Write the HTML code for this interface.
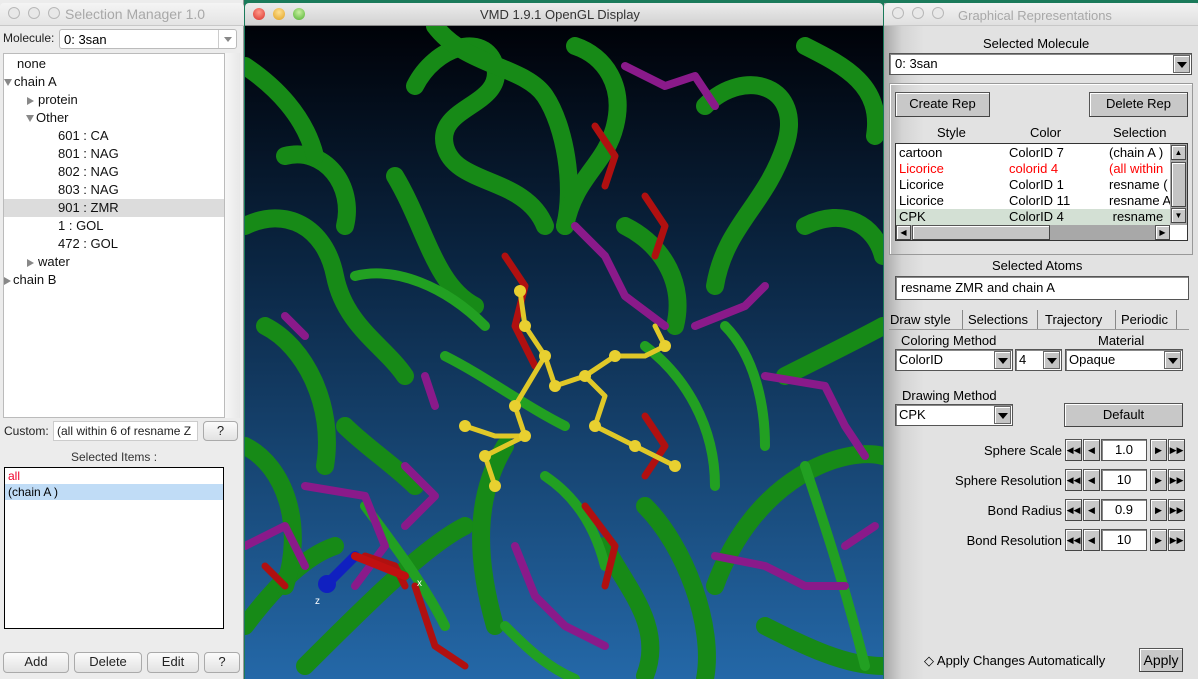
<!DOCTYPE html>
<html><head><meta charset="utf-8"><style>
*{margin:0;padding:0;box-sizing:border-box}
body{width:1198px;height:679px;overflow:hidden;position:relative;background:#1a7a5a;font-family:"Liberation Sans",sans-serif;font-size:13px;color:#000}
.a{position:absolute}
.tl{width:12px;height:12px;border-radius:50%;border:1px solid #b8b8b8;background:#e8e8e8;position:absolute;top:7px}
.btn{position:absolute;background:linear-gradient(#fbfbfb,#e2e2e2);border:1px solid #aaa;border-radius:4px;text-align:center;font-size:13px;color:#222;line-height:18px}
.tk{position:absolute;background:#c8c8c8;border:1px solid #555;border-right-color:#444;border-bottom-color:#444;box-shadow:inset 1px 1px #fff}
.fld{position:absolute;background:#fff;border:1px solid #555;box-shadow:inset 1px 1px #888}
.dd{position:absolute;width:17px;height:18px;right:1px;top:1px;background:#c4c4c4;border:1px solid #666;box-shadow:inset 1px 1px #fff}
.dd:after{content:"";position:absolute;left:3px;top:6px;border-left:5px solid transparent;border-right:5px solid transparent;border-top:6px solid #000}
.tree div{height:18px;line-height:18px;white-space:nowrap}
.tri{display:inline-block;width:0;height:0;vertical-align:middle;margin-right:2px}
.td{border-left:4px solid transparent;border-right:4px solid transparent;border-top:7px solid #888}
.tr{border-top:4px solid transparent;border-bottom:4px solid transparent;border-left:7px solid #888;margin-right:4px}
</style></head><body>
<!-- LEFT: Selection Manager -->
<div class="a" style="left:0;top:0;width:244px;height:679px;background:#ececec;border-right:1px solid #999"></div>
<div class="a" style="left:0;top:3px;width:244px;height:23px;background:linear-gradient(#f4f4f4,#e4e4e4);border-radius:4px 4px 0 0;border-bottom:1px solid #c8c8c8"></div>
<div class="tl" style="left:8px"></div><div class="tl" style="left:28px"></div><div class="tl" style="left:48px"></div>
<div class="a" style="left:65px;top:6px;font-size:14px;color:#a8a8a8">Selection Manager 1.0</div>
<div class="a" style="left:3px;top:31px;font-size:12px;color:#222">Molecule:</div>
<div class="a" style="left:59px;top:29px;width:178px;height:20px;background:#fff;border:1px solid #bbb;border-radius:3px;font-size:13px;padding:2px 4px">0: 3san<div class="a" style="right:0;top:0;width:18px;height:18px;border-left:1px solid #ccc"><div class="a" style="left:5px;top:7px;border-left:4px solid transparent;border-right:4px solid transparent;border-top:5px solid #888"></div></div></div>
<div class="a" style="left:3px;top:53px;width:222px;height:365px;background:#fff;border:1px solid #bbb"></div>
<div class="a" style="left:225px;top:53px;width:15px;height:365px;background:linear-gradient(90deg,#f6f6f6,#e8e8e8)"></div>
<div class="a" style="left:4px;top:199px;width:220px;height:18px;background:#dcdcdc"></div>
<div class="a tree" style="left:4px;top:55px;font-size:13px;color:#111">
<div style="padding-left:13px">none</div>
<div><span class="tri td"></span>chain A</div>
<div style="padding-left:23px"><span class="tri tr"></span>protein</div>
<div style="padding-left:22px"><span class="tri td"></span>Other</div>
<div style="padding-left:54px">601 : CA</div>
<div style="padding-left:54px">801 : NAG</div>
<div style="padding-left:54px">802 : NAG</div>
<div style="padding-left:54px">803 : NAG</div>
<div style="padding-left:54px">901 : ZMR</div>
<div style="padding-left:54px">1 : GOL</div>
<div style="padding-left:54px">472 : GOL</div>
<div style="padding-left:23px"><span class="tri tr"></span>water</div>
<div><span class="tri tr" style="margin-right:2px"></span>chain B</div>
</div>
<div class="a" style="left:4px;top:424px;font-size:12px;color:#222">Custom:</div>
<div class="a" style="left:53px;top:421px;width:145px;height:20px;background:#fff;border:1px solid #ccc;font-size:12px;padding:2px 3px;white-space:nowrap;overflow:hidden;color:#222">(all within 6 of resname Z</div>
<div class="btn" style="left:203px;top:421px;width:35px;height:20px">?</div>
<div class="a" style="left:71px;top:450px;font-size:12px;color:#333">Selected Items :</div>
<div class="a" style="left:4px;top:467px;width:220px;height:162px;background:#fff;border:1px solid #000"></div>
<div class="a" style="left:5px;top:484px;width:218px;height:16px;background:#c0dcf6"></div>
<div class="a" style="left:8px;top:468px;font-size:12px;line-height:16px"><div style="color:#f0002a">all</div><div>(chain A )</div></div>
<div class="btn" style="left:3px;top:652px;width:66px;height:21px">Add</div>
<div class="btn" style="left:74px;top:652px;width:68px;height:21px">Delete</div>
<div class="btn" style="left:147px;top:652px;width:52px;height:21px">Edit</div>
<div class="btn" style="left:204px;top:652px;width:36px;height:21px">?</div>

<!-- MIDDLE: VMD display -->
<div class="a" style="left:245px;top:3px;width:638px;height:23px;background:linear-gradient(#ececec,#d2d2d2);border-radius:4px 4px 0 0;border-bottom:1px solid #888"></div>
<div class="a" style="left:253px;top:8px;width:12px;height:12px;border-radius:50%;background:radial-gradient(circle at 50% 35%,#ff9a8a,#d8302a)"></div>
<div class="a" style="left:273px;top:8px;width:12px;height:12px;border-radius:50%;background:radial-gradient(circle at 50% 35%,#ffe090,#e0a020)"></div>
<div class="a" style="left:293px;top:8px;width:12px;height:12px;border-radius:50%;background:radial-gradient(circle at 50% 35%,#c8f0a0,#50b030)"></div>
<div class="a" style="left:480px;top:7px;font-size:13px;color:#333">VMD 1.9.1 OpenGL Display</div>
<svg class="a" style="left:245px;top:26px" width="638" height="653" viewBox="0 0 638 653">
<defs><linearGradient id="bg" x1="0" y1="0" x2="0" y2="1"><stop offset="0" stop-color="#000208"/><stop offset="0.35" stop-color="#0a2440"/><stop offset="1" stop-color="#2468a8"/></linearGradient></defs>
<rect width="638" height="653" fill="url(#bg)"/>
<g fill="none" stroke-linecap="round" stroke-linejoin="round">
<g stroke="#178a17" stroke-width="18">
<path d="M170 60 C190 20 240 5 250 40 C260 80 190 80 200 120 C210 160 280 150 300 200"/>
<path d="M190 0 C220 40 280 40 300 70 C320 100 330 160 320 200"/>
<path d="M460 80 C500 40 560 60 540 120 C520 180 480 200 470 260"/>
<path d="M560 20 C600 40 638 60 630 110"/>
<path d="M0 200 C40 180 80 200 90 250 C100 300 140 320 160 350"/>
<path d="M40 130 C80 120 110 160 100 200"/>
<path d="M330 20 C360 30 380 60 370 100 C360 140 330 150 320 200"/>
<path d="M470 560 C510 450 600 420 638 430"/>
<path d="M60 640 C120 580 180 520 220 500"/>
<path d="M0 600 C30 560 60 530 90 520"/>
<path d="M360 520 C380 560 420 600 400 650"/>
<path d="M540 350 C580 330 620 310 638 300"/>
<path d="M20 300 C60 320 90 380 80 440"/>
<path d="M380 200 C420 220 440 260 430 300"/>
<path d="M0 420 C40 440 60 500 40 560"/>
<path d="M150 150 C180 200 190 260 230 280"/>
<path d="M400 480 C440 520 470 600 460 653"/>
<path d="M560 200 C600 180 630 200 638 230"/>
<path d="M0 40 C30 60 60 90 70 130"/>
<path d="M260 420 C230 470 230 530 250 600"/>
<path d="M520 600 C560 620 600 640 638 640"/>
<path d="M100 400 C120 420 150 440 170 460"/>
</g>
<g stroke="#22a022" stroke-width="10">
<path d="M110 250 C150 240 200 260 240 300"/>
<path d="M200 330 C240 350 280 380 320 400"/>
<path d="M400 320 C440 350 470 400 470 460"/>
<path d="M120 480 C150 520 180 560 200 600"/>
<path d="M560 440 C580 500 600 560 620 640"/>
<path d="M260 600 C280 620 300 640 330 653"/>
<path d="M300 450 C330 470 350 500 360 540"/>
<path d="M480 300 C510 330 520 380 520 420"/>
</g>
<g stroke="#8a1a8a" stroke-width="8">
<path d="M380 40 L420 60 L450 50 L470 80"/>
<path d="M330 200 L360 230 L380 270 L420 300"/>
<path d="M450 300 L500 280 L520 260"/>
<path d="M520 350 L580 360 L600 400 L620 430"/>
<path d="M60 460 L120 470 L140 520 L110 560"/>
<path d="M0 520 L40 500 L60 540"/>
<path d="M160 440 L190 470 L160 500"/>
<path d="M270 520 L290 570 L320 600 L360 620"/>
<path d="M470 530 L520 540 L560 560 L600 560"/>
<path d="M180 350 L190 380"/>
<path d="M40 290 L60 310"/>
<path d="M600 520 L630 500"/>
</g>
<g stroke="#b01010" stroke-width="7">
<path d="M260 230 L280 260 L270 300 L290 340"/>
<path d="M350 100 L370 130 L360 160"/>
<path d="M400 170 L420 200 L410 230"/>
<path d="M340 480 L370 520 L360 560"/>
<path d="M170 560 L190 620 L220 640"/>
<path d="M120 530 L150 540 L160 560"/>
<path d="M400 390 L420 420 L400 450"/>
<path d="M20 540 L40 560"/>
</g>
<g stroke="#e0c828" stroke-width="5">
<path d="M275 265 L280 300 L300 330 L310 360 L340 350 L360 370 L350 400 L370 410 L390 420 L430 440"/>
<path d="M300 330 L270 380 L280 410 L240 430 L250 460"/>
<path d="M340 350 L370 330 L400 330 L420 320 L410 300"/>
<path d="M220 400 L250 410 L280 410"/>
</g>
<g fill="#e8d030" stroke="none">
<circle cx="275" cy="265" r="6"/><circle cx="300" cy="330" r="6"/><circle cx="310" cy="360" r="6"/><circle cx="340" cy="350" r="6"/><circle cx="350" cy="400" r="6"/><circle cx="390" cy="420" r="6"/><circle cx="430" cy="440" r="6"/><circle cx="270" cy="380" r="6"/><circle cx="280" cy="410" r="6"/><circle cx="240" cy="430" r="6"/><circle cx="250" cy="460" r="6"/><circle cx="370" cy="330" r="6"/><circle cx="420" cy="320" r="6"/><circle cx="220" cy="400" r="6"/><circle cx="280" cy="300" r="6"/>
</g>
<path d="M80 560 L110 530" stroke="#1020c0" stroke-width="10"/>
<circle cx="82" cy="558" r="9" fill="#1020c0"/>
<path d="M110 530 L160 550" stroke="#c01010" stroke-width="8"/>
</g>
<text x="70" y="578" fill="#fff" font-size="10" font-family="Liberation Sans">z</text>
<text x="172" y="560" fill="#fff" font-size="10" font-family="Liberation Sans">x</text>
</svg>

<!-- RIGHT: Graphical Representations -->
<div class="a" style="left:884px;top:3px;width:314px;height:676px;background:linear-gradient(90deg,#a8a8a8,#d4d4d4 18px,#e2e2e2 40px,#e2e2e2)"></div>
<div class="a" style="left:884px;top:3px;width:314px;height:23px;background:linear-gradient(#f2f2f2,#e0e0e0);border-radius:4px 4px 0 0;border-bottom:1px solid #c8c8c8"></div>
<div class="tl" style="left:892px"></div><div class="tl" style="left:912px"></div><div class="tl" style="left:932px"></div>
<div class="a" style="left:958px;top:8px;font-size:13px;color:#a8a8a8">Graphical Representations</div>
<div class="a" style="left:983px;top:36px;font-size:13px">Selected Molecule</div>
<div class="fld" style="left:889px;top:53px;width:303px;height:22px;padding:2px 5px">0: 3san<div class="dd" style="height:18px"></div></div>
<div class="a" style="left:889px;top:83px;width:304px;height:172px;border:1px solid #999;box-shadow:inset 1px 1px #fff"></div>
<div class="tk" style="left:895px;top:92px;width:95px;height:25px;text-align:center;line-height:22px">Create Rep</div>
<div class="tk" style="left:1089px;top:92px;width:99px;height:25px;text-align:center;line-height:22px">Delete Rep</div>
<div class="a" style="left:937px;top:125px">Style</div>
<div class="a" style="left:1030px;top:125px">Color</div>
<div class="a" style="left:1113px;top:125px">Selection</div>
<div class="a" style="left:895px;top:143px;width:293px;height:98px;background:#fff;border:1px solid #333"></div>
<div class="a" style="left:896px;top:209px;width:274px;height:16px;background:#d3e0d4"></div>
<div class="a" style="left:899px;top:145px;line-height:16px"><div>cartoon</div><div style="color:#f00">Licorice</div><div>Licorice</div><div>Licorice</div><div>CPK</div></div>
<div class="a" style="left:1009px;top:145px;line-height:16px"><div>ColorID 7</div><div style="color:#f00">colorid 4</div><div>ColorID 1</div><div>ColorID 11</div><div>ColorID 4</div></div>
<div class="a" style="left:1109px;top:145px;line-height:16px;width:61px;overflow:hidden;white-space:nowrap"><div>(chain A )</div><div style="color:#f00">(all within</div><div>resname (</div><div>resname A</div><div>&nbsp;resname</div></div>
<div class="a" style="left:1170px;top:144px;width:17px;height:81px;background:#a8a8a8"></div>
<div class="tk" style="left:1171px;top:145px;width:15px;height:15px;font-size:8px;text-align:center;line-height:13px">▲</div>
<div class="tk" style="left:1171px;top:162px;width:15px;height:45px;background:#c4c4c4"></div>
<div class="tk" style="left:1171px;top:208px;width:15px;height:15px;font-size:8px;text-align:center;line-height:13px">▼</div>
<div class="a" style="left:896px;top:225px;width:274px;height:15px;background:#a8a8a8"></div>
<div class="tk" style="left:896px;top:225px;width:15px;height:15px;font-size:8px;text-align:center;line-height:13px">◀</div>
<div class="tk" style="left:912px;top:225px;width:138px;height:15px;background:#c4c4c4"></div>
<div class="tk" style="left:1155px;top:225px;width:15px;height:15px;font-size:8px;text-align:center;line-height:13px">▶</div>
<div class="a" style="left:992px;top:258px">Selected Atoms</div>
<div class="fld" style="left:895px;top:276px;width:294px;height:24px;padding:3px 5px">resname ZMR and chain A</div>
<div class="a" style="left:889px;top:310px;width:300px;height:20px;border-bottom:1px solid #999"></div>
<div class="a" style="left:890px;top:312px">Draw style</div>
<div class="a" style="left:962px;top:310px;height:19px;border-left:1px solid #888;border-right:1px solid #888;width:76px;padding-left:5px;padding-top:2px">Selections</div>
<div class="a" style="left:1045px;top:312px">Trajectory</div>
<div class="a" style="left:1115px;top:310px;height:19px;border-left:1px solid #888;border-right:1px solid #888;width:62px;padding-left:5px;padding-top:2px">Periodic</div>
<div class="a" style="left:901px;top:333px">Coloring Method</div>
<div class="a" style="left:1098px;top:333px">Material</div>
<div class="fld" style="left:895px;top:349px;width:118px;height:22px;padding:2px 3px">ColorID<div class="dd"></div></div>
<div class="fld" style="left:1015px;top:349px;width:47px;height:22px;padding:2px 3px">4<div class="dd"></div></div>
<div class="fld" style="left:1065px;top:349px;width:118px;height:22px;padding:2px 3px">Opaque<div class="dd"></div></div>
<div class="a" style="left:902px;top:388px">Drawing Method</div>
<div class="fld" style="left:895px;top:404px;width:118px;height:22px;padding:2px 3px">CPK<div class="dd"></div></div>
<div class="tk" style="left:1064px;top:403px;width:119px;height:24px;text-align:center;line-height:22px">Default</div>
<div class="a" style="left:884px;top:443px;width:178px;text-align:right;line-height:16px">
<div style="height:30px">Sphere Scale</div><div style="height:30px">Sphere Resolution</div><div style="height:30px">Bond Radius</div><div style="height:30px">Bond Resolution</div></div>
<div class="a" style="left:1065px;top:439px">
<div style="position:relative;height:30px"><div class="tk" style="left:0;width:17px;height:22px;font-size:9px;text-align:center;line-height:20px">◀◀</div><div class="tk" style="left:18px;width:17px;height:22px;font-size:9px;text-align:center;line-height:20px">◀</div><div class="fld" style="left:36px;width:46px;height:22px;text-align:center;line-height:19px">1.0</div><div class="tk" style="left:85px;width:17px;height:22px;font-size:9px;text-align:center;line-height:20px">▶</div><div class="tk" style="left:103px;width:17px;height:22px;font-size:9px;text-align:center;line-height:20px">▶▶</div></div>
<div style="position:relative;height:30px"><div class="tk" style="left:0;width:17px;height:22px;font-size:9px;text-align:center;line-height:20px">◀◀</div><div class="tk" style="left:18px;width:17px;height:22px;font-size:9px;text-align:center;line-height:20px">◀</div><div class="fld" style="left:36px;width:46px;height:22px;text-align:center;line-height:19px">10</div><div class="tk" style="left:85px;width:17px;height:22px;font-size:9px;text-align:center;line-height:20px">▶</div><div class="tk" style="left:103px;width:17px;height:22px;font-size:9px;text-align:center;line-height:20px">▶▶</div></div>
<div style="position:relative;height:30px"><div class="tk" style="left:0;width:17px;height:22px;font-size:9px;text-align:center;line-height:20px">◀◀</div><div class="tk" style="left:18px;width:17px;height:22px;font-size:9px;text-align:center;line-height:20px">◀</div><div class="fld" style="left:36px;width:46px;height:22px;text-align:center;line-height:19px">0.9</div><div class="tk" style="left:85px;width:17px;height:22px;font-size:9px;text-align:center;line-height:20px">▶</div><div class="tk" style="left:103px;width:17px;height:22px;font-size:9px;text-align:center;line-height:20px">▶▶</div></div>
<div style="position:relative;height:30px"><div class="tk" style="left:0;width:17px;height:22px;font-size:9px;text-align:center;line-height:20px">◀◀</div><div class="tk" style="left:18px;width:17px;height:22px;font-size:9px;text-align:center;line-height:20px">◀</div><div class="fld" style="left:36px;width:46px;height:22px;text-align:center;line-height:19px">10</div><div class="tk" style="left:85px;width:17px;height:22px;font-size:9px;text-align:center;line-height:20px">▶</div><div class="tk" style="left:103px;width:17px;height:22px;font-size:9px;text-align:center;line-height:20px">▶▶</div></div>
</div>
<div class="a" style="left:924px;top:653px;font-size:13px">◇ Apply Changes Automatically</div>
<div class="tk" style="left:1139px;top:648px;width:44px;height:24px;text-align:center;line-height:22px;font-size:14px">Apply</div>
</body></html>
